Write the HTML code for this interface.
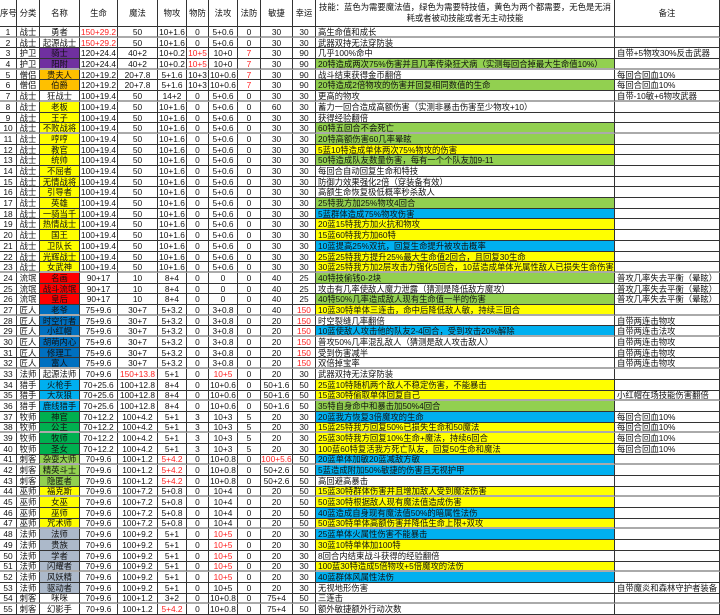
<!DOCTYPE html>
<html lang="zh">
<head>
<meta charset="utf-8">
<title>职业表</title>
<style>
html,body{margin:0;padding:0;background:#fff;width:720px;height:615px;overflow:hidden}
table{border-collapse:separate;border-spacing:0;table-layout:fixed;width:720px;font:8.35px/8px "Liberation Sans","Noto Sans CJK SC",sans-serif;color:#111;filter:blur(.3px)}
td{padding:0;text-align:center;vertical-align:middle;white-space:nowrap;overflow:hidden;border-right:1px solid #333;border-bottom:1px solid #333;box-sizing:border-box}
tr{height:11px}
tr.t,tr.u{height:10px}
tr.g td,tr.u td{border-bottom:2px solid #aaa}
tr.h{height:27px}
tr.h td{line-height:11px}
td.s,td.n{text-align:left;padding-left:2px}
tr.h td.s{text-align:center;padding:0}
tr.h td.n{text-align:center;padding:0}
.r{color:#f22}
.p{background:#7030a0}.o{background:#ffc000}.y{background:#ff0}.R{background:#f00}.b{background:#0070c0}.c{background:#00b0f0}.G{background:#00b050}.L{background:#92d050}.S{background:#acb9ca}
</style>
</head>
<body>
<table>
<colgroup><col style="width:17px"><col style="width:23px"><col style="width:40px"><col style="width:38px"><col style="width:40px"><col style="width:29px"><col style="width:22px"><col style="width:29px"><col style="width:23px"><col style="width:32px"><col style="width:23px"><col style="width:299px"><col style="width:105px"></colgroup>
<tr class="h"><td>序号<td>分类<td>名称<td>生命<td>魔法<td>物攻<td>物防<td>法攻<td>法防<td>敏捷<td>幸运<td class="s">技能：蓝色为需要魔法值，绿色为需要特技值，黄色为两个都需要，无色是无消<br>耗或者被动技能或者无主动技能<td class="n">备注
<tr class="g"><td>1<td>战士<td>勇者<td class="r">150+29.2<td>50<td>10+1.6<td>0<td>5+0.6<td>0<td>30<td>30<td class="s">高生命值和成长<td class="n">
<tr class="t"><td>2<td>战士<td>起源战士<td class="r">150+29.2<td>50<td>10+1.6<td>0<td>5+0.6<td>0<td>30<td>30<td class="s">武器双持无法穿防装<td class="n">
<tr><td>3<td>护卫<td class="p">骑士<td>120+24.4<td>40+2<td>10+0.2<td class="r">10+5<td>10+0<td class="r">7<td>30<td>90<td class="s">几乎100%命中<td class="n">自带+5物攻30%反击武器
<tr class="g"><td>4<td>护卫<td class="p">阳附<td>120+24.4<td>40+2<td>10+0.2<td class="r">10+5<td>10+0<td class="r">7<td>30<td>90<td class="s L">20特造成两次75%伤害并且几率传染狂犬病（实测每回合掉最大生命值10%）<td class="n">
<tr class="t"><td>5<td>僧侣<td class="o">贵夫人<td>120+19.2<td>20+7.8<td>5+1.6<td>10+3<td>10+0.6<td class="r">7<td>30<td>90<td class="s">战斗结束获得金币翻倍<td class="n">每回合回血10%
<tr><td>6<td>僧侣<td class="o">伯爵<td>120+19.2<td>20+7.8<td>5+1.6<td>10+3<td>10+0.6<td class="r">7<td>30<td>90<td class="s L">20特造成2倍物攻的伤害并回复相同数值的生命<td class="n">每回合回血10%
<tr class="g"><td>7<td>战士<td>狂战士<td>100+19.4<td>50<td>14+2<td>0<td>5+0.6<td>0<td>30<td>30<td class="s">更高的物攻<td class="n">自带-10敏+6物攻武器
<tr><td>8<td>战士<td class="y">老板<td>100+19.4<td>50<td>10+1.6<td>0<td>5+0.6<td>0<td>60<td>30<td class="s">蓄力一回合造成高额伤害（实测非暴击伤害至少物攻+10）<td class="n">
<tr class="t"><td>9<td>战士<td class="y">王子<td>100+19.4<td>50<td>10+1.6<td>0<td>5+0.6<td>0<td>30<td>30<td class="s">获得经验翻倍<td class="n">
<tr class="g"><td>10<td>战士<td class="y">不败战将<td>100+19.4<td>50<td>10+1.6<td>0<td>5+0.6<td>0<td>30<td>30<td class="s L">60特五回合不会死亡<td class="n">
<tr><td>11<td>战士<td class="y">哼哼<td>100+19.4<td>50<td>10+1.6<td>0<td>5+0.6<td>0<td>30<td>30<td class="s L">20特高额伤害60几率晕眩<td class="n">
<tr class="t"><td>12<td>战士<td class="y">教官<td>100+19.4<td>50<td>10+1.6<td>0<td>5+0.6<td>0<td>30<td>30<td class="s y">5蓝10特造成单体两次75%物攻的伤害<td class="n">
<tr><td>13<td>战士<td class="y">统帅<td>100+19.4<td>50<td>10+1.6<td>0<td>5+0.6<td>0<td>30<td>30<td class="s L">50特造成队友数量伤害，每有一个个队友加9-11<td class="n">
<tr><td>14<td>战士<td class="y">不屈者<td>100+19.4<td>50<td>10+1.6<td>0<td>5+0.6<td>0<td>30<td>30<td class="s">每回合自动回复生命和特技<td class="n">
<tr class="t"><td>15<td>战士<td class="y">无情战将<td>100+19.4<td>50<td>10+1.6<td>0<td>5+0.6<td>0<td>30<td>30<td class="s">防御力效果强化2倍（穿装备有效）<td class="n">
<tr><td>16<td>战士<td class="y">引导者<td>100+19.4<td>50<td>10+1.6<td>0<td>5+0.6<td>0<td>30<td>30<td class="s">高额生命恢复极低概率秒杀敌人<td class="n">
<tr><td>17<td>战士<td class="y">英雄<td>100+19.4<td>50<td>10+1.6<td>0<td>5+0.6<td>0<td>30<td>30<td class="s L">25特我方加25%物攻4回合<td class="n">
<tr class="t"><td>18<td>战士<td class="y">一骑当千<td>100+19.4<td>50<td>10+1.6<td>0<td>5+0.6<td>0<td>30<td>30<td class="s c">5蓝群体造成75%物攻伤害<td class="n">
<tr><td>19<td>战士<td class="y">热情战士<td>100+19.4<td>50<td>10+1.6<td>0<td>5+0.6<td>0<td>30<td>30<td class="s y">20蓝15特我方加火抗和物攻<td class="n">
<tr><td>20<td>战士<td class="y">国王<td>100+19.4<td>50<td>10+1.6<td>0<td>5+0.6<td>0<td>30<td>30<td class="s y">15蓝60特我方加60特<td class="n">
<tr><td>21<td>战士<td class="y">卫队长<td>100+19.4<td>50<td>10+1.6<td>0<td>5+0.6<td>0<td>30<td>30<td class="s c">10蓝提高25%双抗，回复生命提升被攻击概率<td class="n">
<tr class="t"><td>22<td>战士<td class="y">光辉战士<td>100+19.4<td>50<td>10+1.6<td>0<td>5+0.6<td>0<td>30<td>30<td class="s y">25蓝25特我方提升25%最大生命值2回合，且回复30生命<td class="n">
<tr class="g"><td>23<td>战士<td class="y">女武神<td>100+19.4<td>50<td>10+1.6<td>0<td>5+0.6<td>0<td>30<td>30<td class="s y">30蓝25特我方加2层攻击力强化5回合，10蓝造成单体光属性敌人已损失生命伤害<td class="n">
<tr><td>24<td>流氓<td class="R">名画<td>90+17<td>10<td>8+4<td>0<td>0<td>0<td>40<td>25<td class="s L">40特技偷钱0-2块<td class="n">普攻几率失去平衡（晕眩）
<tr class="t"><td>25<td>流氓<td class="R">战斗流氓<td>90+17<td>10<td>8+4<td>0<td>0<td>0<td>40<td>25<td class="s">攻击有几率使敌人魔力泄露（猜测是降低敌方魔攻）<td class="n">普攻几率失去平衡（晕眩）
<tr><td>26<td>流氓<td class="R">皇后<td>90+17<td>10<td>8+4<td>0<td>0<td>0<td>40<td>25<td class="s L">40特50%几率造成敌人现有生命值一半的伤害<td class="n">普攻几率失去平衡（晕眩）
<tr class="g"><td>27<td>匠人<td class="b">老爷<td>75+9.6<td>30+7<td>5+3.2<td>0<td>3+0.8<td>0<td>40<td class="r">150<td class="s y">10蓝30特单体三连击，命中后降低敌人敏，持续三回合<td class="n">
<tr class="t"><td>28<td>匠人<td class="b">时空行者<td>75+9.6<td>30+7<td>5+3.2<td>0<td>3+0.8<td>0<td>20<td class="r">150<td class="s">时空裂缝几率翻倍<td class="n">自带两连击物攻
<tr class="g"><td>29<td>匠人<td class="b">小红帽<td>75+9.6<td>30+7<td>5+3.2<td>0<td>3+0.8<td>0<td>20<td class="r">150<td class="s c">10蓝使敌人攻击他的队友2-4回合，受到攻击20%解除<td class="n">自带两连击法攻
<tr><td>30<td>匠人<td class="b">胡萌内心<td>75+9.6<td>30+7<td>5+3.2<td>0<td>3+0.8<td>0<td>20<td class="r">150<td class="s">普攻50%几率混乱敌人（猜测是敌人攻击敌人）<td class="n">自带两连击物攻
<tr class="t"><td>31<td>匠人<td class="b">修理工<td>75+9.6<td>30+7<td>5+3.2<td>0<td>3+0.8<td>0<td>20<td class="r">150<td class="s">受到伤害减半<td class="n">自带两连击物攻
<tr class="g"><td>32<td>匠人<td class="b">富人<td>75+9.6<td>30+7<td>5+3.2<td>0<td>3+0.8<td>0<td>20<td class="r">150<td class="s">双倍掉宝率<td class="n">自带两连击物攻
<tr><td>33<td>法师<td>起源法师<td>70+9.6<td class="r">150+13.8<td>5+1<td>0<td class="r">10+5<td>0<td>20<td>30<td class="s">武器双持无法穿防装<td class="n">
<tr><td>34<td>猎手<td class="c">火枪手<td>70+25.6<td>100+12.8<td>8+4<td>0<td>10+0.6<td>0<td>50+1.6<td>50<td class="s y">25蓝10特随机两个敌人不稳定伤害，不能暴击<td class="n">
<tr class="u"><td>35<td>猎手<td class="c">大灰狼<td>70+25.6<td>100+12.8<td>8+4<td>0<td>10+0.6<td>0<td>50+1.6<td>50<td class="s y">15蓝30特偷取单体回复自己<td class="n">小红帽在场技能伤害翻倍
<tr><td>36<td>猎手<td class="c">鹿线猎手<td>70+25.6<td>100+12.8<td>8+4<td>0<td>10+0.6<td>0<td>50+1.6<td>50<td class="s L">35特自身命中和暴击加50%4回合<td class="n">
<tr><td>37<td>牧师<td class="G">神官<td>70+12.2<td>100+4.2<td>5+1<td>3<td>10+3<td>5<td>20<td>30<td class="s c">20蓝我方恢复3倍魔攻的生命<td class="n">每回合回血10%
<tr class="u"><td>38<td>牧师<td class="G">公主<td>70+12.2<td>100+4.2<td>5+1<td>3<td>10+3<td>5<td>20<td>30<td class="s y">15蓝25特我方回复50%已损失生命和50魔法<td class="n">每回合回血10%
<tr><td>39<td>牧师<td class="G">牧师<td>70+12.2<td>100+4.2<td>5+1<td>3<td>10+3<td>5<td>20<td>30<td class="s y">25蓝30特我方回复10%生命+魔法，持续6回合<td class="n">每回合回血10%
<tr><td>40<td>牧师<td class="G">圣女<td>70+12.2<td>100+4.2<td>5+1<td>3<td>10+3<td>5<td>20<td>30<td class="s y">100蓝60特复活我方死亡队友，回复50生命和魔法<td class="n">每回合回血10%
<tr class="u"><td>41<td>刺客<td class="L">杂耍大师<td>70+9.6<td>100+1.2<td class="r">5+4.2<td>0<td>10+0.8<td>0<td class="r">100+5.6<td>50<td class="s c">20蓝单体加敏20蓝减敌方敏<td class="n">
<tr><td>42<td>刺客<td class="L">精英斗士<td>70+9.6<td>100+1.2<td class="r">5+4.2<td>0<td>10+0.8<td>0<td>50+2.6<td>50<td class="s c">5蓝造成附加50%敏捷的伤害且无视护甲<td class="n">
<tr><td>43<td>刺客<td class="L">隐匿者<td>70+9.6<td>100+1.2<td class="r">5+4.2<td>0<td>10+0.8<td>0<td>50+2.6<td>50<td class="s">高回避高暴击<td class="n">
<tr class="u"><td>44<td>巫师<td class="y">福克斯<td>70+9.6<td>100+7.2<td>5+0.8<td>0<td>10+4<td>0<td>20<td>50<td class="s y">15蓝30特群体伤害并且增加敌人受到魔法伤害<td class="n">
<tr><td>45<td>巫师<td class="y">女巫<td>70+9.6<td>100+7.2<td>5+0.8<td>0<td>10+4<td>0<td>20<td>50<td class="s y">50蓝30特根据敌人现有魔法值造成伤害<td class="n">
<tr><td>46<td>巫师<td class="y">巫师<td>70+9.6<td>100+7.2<td>5+0.8<td>0<td>10+4<td>0<td>20<td>50<td class="s c">40蓝造成自身现有魔法值50%的暗属性法伤<td class="n">
<tr class="u"><td>47<td>巫师<td class="y">咒术师<td>70+9.6<td>100+7.2<td>5+0.8<td>0<td>10+4<td>0<td>20<td>50<td class="s y">50蓝30特单体高额伤害并降低生命上限+双攻<td class="n">
<tr><td>48<td>法师<td class="S">法师<td>70+9.6<td>100+9.2<td>5+1<td>0<td class="r">10+5<td>0<td>20<td>30<td class="s c">25蓝单体火属性伤害不能暴击<td class="n">
<tr><td>49<td>法师<td class="S">贵族<td>70+9.6<td>100+9.2<td>5+1<td>0<td class="r">10+5<td>0<td>20<td>30<td class="s y">30蓝10特单体加100特<td class="n">
<tr><td>50<td>法师<td class="S">学者<td>70+9.6<td>100+9.2<td>5+1<td>0<td class="r">10+5<td>0<td>20<td>30<td class="s">8回合内结束战斗获得的经验翻倍<td class="n">
<tr class="u"><td>51<td>法师<td class="S">闪耀者<td>70+9.6<td>100+9.2<td>5+1<td>0<td class="r">10+5<td>0<td>20<td>30<td class="s y">100蓝30特造成5倍物攻+5倍魔攻的法伤<td class="n">
<tr><td>52<td>法师<td class="S">风妖精<td>70+9.6<td>100+9.2<td>5+1<td>0<td class="r">10+5<td>0<td>20<td>30<td class="s c">40蓝群体风属性法伤<td class="n">
<tr><td>53<td>法师<td class="S">驱动者<td>70+9.6<td>100+9.2<td>5+1<td>0<td>10+5<td>0<td>20<td>30<td class="s">无视地形伤害<td class="n">自带魔炎和森林守护者装备
<tr class="u"><td>54<td>刺客<td>咪咪<td>70+9.6<td>100+1.2<td>3+2<td>0<td>10+0.8<td>0<td>75+4<td>50<td class="s">三连击<td class="n">
<tr><td>55<td>刺客<td>幻影手<td>70+9.6<td>100+1.2<td class="r">5+4.2<td>0<td>10+0.8<td>0<td>75+4<td>50<td class="s">额外敏捷额外行动次数<td class="n">
</table>
</body>
</html>
